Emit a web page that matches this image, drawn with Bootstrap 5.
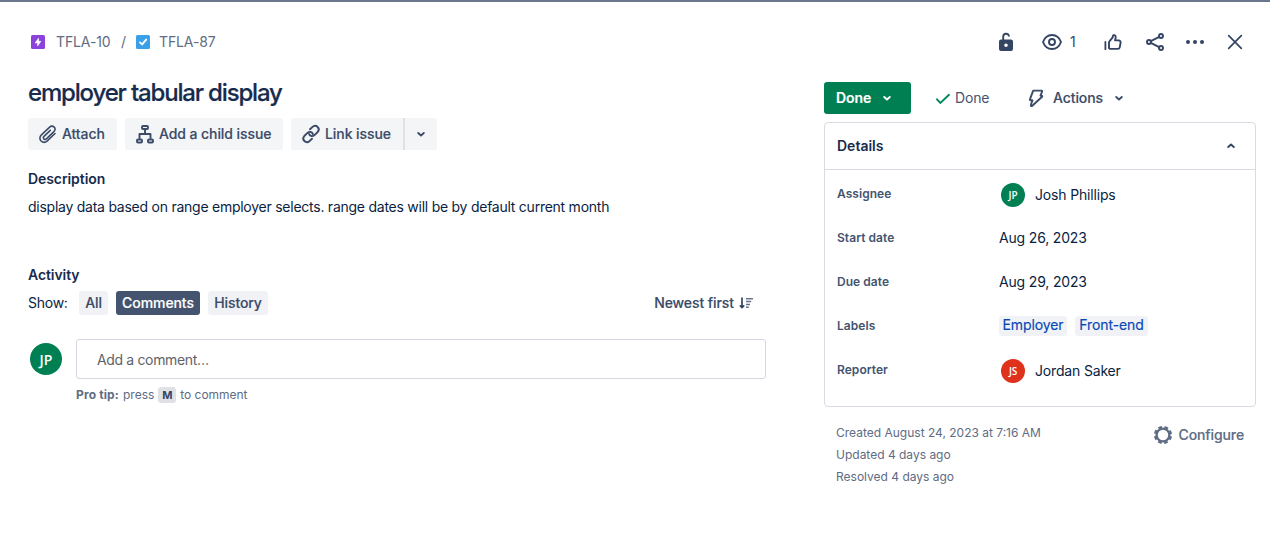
<!DOCTYPE html>
<html lang="en">
<head>
<meta charset="utf-8">
<meta name="viewport" content="width=device-width, initial-scale=1">
<title>TFLA-87 employer tabular display</title>
<link href="https://cdn.jsdelivr.net/npm/bootstrap@5.3.0/dist/css/bootstrap.min.css" rel="stylesheet">
<style>
  body{font-family:Inter,"Liberation Sans",sans-serif;font-size:14px;line-height:20px;color:#172b4d;background:#fff;overflow:hidden}
  svg{display:block;flex:none}
  .ln{fill:none;stroke:currentColor;stroke-width:1.9;stroke-linecap:round;stroke-linejoin:round}
  .issue-view{border-top:2px solid #6b778c;height:538px}
  .crumbs{height:80px;padding:0 23px 0 28px;color:#5e6c84;letter-spacing:-.12px}
  .tools{color:#344563}
  .col-main{width:738px;margin-left:28px}
  .col-side{width:432px;margin-left:58px}
  h1{font-size:24px;line-height:28px;font-weight:500;letter-spacing:-1.17px;margin:-3px 0 11px;color:#172b4d;-webkit-text-stroke:.2px}
  h2{font-size:14px;line-height:20px;font-weight:600;margin:0;letter-spacing:-.08px}
  .btn{--bs-btn-font-size:14px;--bs-btn-line-height:20px;--bs-btn-border-width:0;--bs-btn-border-radius:3px;--bs-btn-color:#3b4b68;height:32px;padding:0;display:flex;align-items:center;font-weight:500;letter-spacing:-.08px;-webkit-text-stroke:.15px}
  .btn-soft{--bs-btn-bg:#f4f5f7}
  .btn-filter{--bs-btn-bg:#f1f2f6;height:24px;justify-content:center}
  .btn-filter.on{background:#44546f;color:#fff}
  .btn-status{background:#007f53;color:#fff;font-weight:600;width:87px}
  .avatar{width:24px;height:24px;font:600 10px "Open Sans",sans-serif;color:#fff;background:#007f53}
  .avatar-lg{width:32px;height:32px;font-size:14px}
  .desc{color:#091e42;letter-spacing:-.25px}
  .comment-box{height:40px;width:690px;border:1px solid #d5d8e0;border-radius:3px;color:#5f6368;padding-left:20px;padding-top:2px;letter-spacing:-.35px}
  .tip{font-size:12px;line-height:16px;color:#5e6c84;margin:8px 0 0 48px}
  kbd{background:#dfe1e6;color:#344563;font:700 11px/16px Inter,sans-serif;padding:0;width:18px;height:16px;text-align:center;border-radius:3px}
  .panel{border:1px solid #d8dbe2;border-radius:4px;height:285px;margin-top:8px}
  .panel-head{height:47px;border-bottom:1px solid #d8dbe2;padding:0 18px 0 12px}
  .field-row{height:44px;padding-left:12px;color:#091e42;letter-spacing:-.17px}
  .field-name{width:162px;font-size:12px;line-height:16px;font-weight:600;color:#44546f;letter-spacing:.05px}
  .tag{background:#f1f2f6;color:#0747b6;border-radius:3px;height:20px;line-height:18px;text-align:center;letter-spacing:-.1px;-webkit-text-stroke:.15px}
  .stamps{font-size:12px;line-height:22px;color:#5e6c84;padding:15px 12px 0}
</style>
</head>
<body>
<main class="issue-view">
  <header class="crumbs d-flex align-items-center justify-content-between">
    <nav class="d-flex align-items-center">
      <svg width="20" height="20" viewBox="0 0 20 20"><rect x="3" y="3" width="14" height="14" rx="1.5" fill="#8c43dc"/><path d="M10.500 6.300v3h2.300L9.700 13.900v-3H7.200z" fill="#fff" stroke="#fff" stroke-width=".7" stroke-linejoin="round"/></svg>
      <span style="margin-left:8px;width:65px">TFLA-10</span><span style="width:12px">/</span>
      <svg width="20" height="20" viewBox="0 0 20 20"><rect x="3" y="3" width="14" height="14" rx="1.5" fill="#3aa1e8"/><path d="M7 10.400l2.100 2L13.200 7.600" fill="none" stroke="#fff" stroke-width="1.900" stroke-linecap="round" stroke-linejoin="round"/></svg>
      <span style="margin-left:6px">TFLA-87</span>
    </nav>
    <div class="tools d-flex align-items-center">
      <svg width="24" height="24" viewBox="0 0 24 24"><path d="M9.200 11V6.300a2.900 2.900 0 0 1 5.700-.4v.6" fill="none" stroke="currentColor" stroke-width="1.900"/><path fill="currentColor" fill-rule="evenodd" d="M7 9.500h10a2 2 0 0 1 2 2v7.500a2 2 0 0 1-2 2H7a2 2 0 0 1-2-2V11.500a2 2 0 0 1 2-2zm5 4a1.800 1.800 0 1 0 0 3.600 1.800 1.800 0 0 0 0-3.600z"/></svg>
      <svg style="margin-left:22px" width="24" height="24" viewBox="0 0 24 24" class="ln"><path d="M3 12c1.500-4 4.800-7 9-7s7.500 3 9 7c-1.500 4-4.800 7-9 7s-7.500-3-9-7z"/><circle cx="12" cy="12" r="3"/></svg>
      <span style="width:15px;margin:0 16px 0 6px">1</span>
      <svg width="24" height="24" viewBox="0 0 24 24" class="ln"><path stroke-width="1.800" d="M4.400 12v7.200"/><path d="M8 17.800V12.600c0-.6.2-1.100.6-1.500l2.900-3.400.5-2c.3-1 2.700-.8 2.700 1.400 0 1.300-.6 2.400-.6 3.300h3.500c1.400 0 2.200.9 2 2.200l-.8 4.500c-.2 1.200-1 1.800-2 1.800H10c-1.200 0-2-.4-2-1.100z"/></svg>
      <svg style="margin-left:18px" width="24" height="24" viewBox="0 0 24 24" class="ln"><circle cx="6" cy="12" r="2"/><circle cx="18" cy="6" r="2"/><circle cx="18" cy="18" r="2"/><path d="M7.800 11.100L16.200 6.900M7.800 12.900l8.400 4.200"/></svg>
      <svg style="margin-left:16px" width="24" height="24" viewBox="0 0 24 24" fill="currentColor"><circle cx="5" cy="12" r="2"/><circle cx="12" cy="12" r="2"/><circle cx="19" cy="12" r="2"/></svg>
      <svg style="margin-left:16px" width="24" height="24" viewBox="0 0 24 24" class="ln"><path stroke-width="1.700" d="M5.700 5.700l12.600 12.600M18.300 5.700L5.700 18.300"/></svg>
    </div>
  </header>

  <div class="d-flex">
    <section class="col-main">
      <h1>employer tabular display</h1>
      <div class="d-flex gap-2">
        <button class="btn btn-soft" style="width:89px;padding-left:8px"><svg width="24" height="24" viewBox="0 0 24 24" class="ln"><path style="stroke-width:1.6" d="M19 11.500l-7.700 7.300c-1.900 1.800-4.500 1.800-6.200.2s-1.600-4.300.3-6.100l8-7.600c1.500-1.400 3.500-1.400 4.800-.2s1.200 3.200-.3 4.600l-7.500 7.100c-.8.800-1.900.8-2.600.1s-.6-1.700.2-2.500l6.300-6"/></svg><span style="margin-left:2px">Attach</span></button>
        <button class="btn btn-soft" style="width:158px;padding-left:8px"><svg width="24" height="24" viewBox="0 0 24 24" class="ln"><rect x="9" y="4" width="6" height="3" rx="1"/><rect x="4" y="17.500" width="5" height="3" rx="1"/><rect x="15" y="17.500" width="5" height="3" rx="1"/><path d="M12 8v4M6.500 16v-4h11v4"/></svg><span style="margin-left:2px">Add a child issue</span></button>
        <div class="d-flex">
          <button class="btn btn-soft rounded-end-0" style="width:112px;padding-left:8px"><svg width="24" height="24" viewBox="0 0 24 24" class="ln"><path d="M11 7.300l2.300-2.200c3.900-3.300 8.500 1.300 5.400 4.900l-3.200 3.100c-2 1.800-4.700 1.100-5.500-1.200"/><path d="M13 16.700l-2.300 2.200c-3.900 3.300-8.500-1.300-5.400-4.900l3.200-3.100c2-1.800 4.700-1.100 5.500 1.200"/></svg><span style="margin-left:2px">Link issue</span></button>
          <button class="btn btn-soft rounded-start-0 justify-content-center" style="width:34px;border-left:2px solid #dfe1e6"><svg width="16" height="16" viewBox="0 0 16 16" class="ln"><path d="M5.200 7L8 9.500 10.800 7"/></svg></button>
        </div>
      </div>
      <h2 style="margin-top:19px">Description</h2>
      <p class="desc mb-0" style="margin-top:8px">display data based on range employer selects. range dates will be by default current month</p>
      <h2 style="margin-top:48px">Activity</h2>
      <div class="d-flex align-items-center" style="margin-top:6px">
        <span class="desc" style="width:51px">Show:</span>
        <button class="btn btn-filter" style="width:29px">All</button>
        <button class="btn btn-filter on" style="width:84px;margin:0 8px">Comments</button>
        <button class="btn btn-filter" style="width:60px">History</button>
        <button class="btn ms-auto" style="height:24px">Newest first</button>
        <svg style="margin:0 12px 0 4px;color:#344563" width="16" height="16" viewBox="0 0 16 16" class="ln"><path stroke-width="1.700" d="M4 3v9.500M2.300 10.900L4 12.600l1.700-1.700"/><path style="stroke-width:1.500" stroke-linecap="butt" opacity=".75" d="M8 3.700h7M8 6.600h5.200M8 9.400h4M8 12.300h2.800"/></svg>
      </div>
      <div class="d-flex align-items-center" style="margin-top:24px">
        <div class="avatar avatar-lg rounded-circle d-flex align-items-center justify-content-center" style="margin:0 14px 0 2px">JP</div>
        <div class="comment-box d-flex align-items-center">Add a comment…</div>
      </div>
      <div class="tip d-flex align-items-center"><b class="fw-bold" style="letter-spacing:.15px">Pro tip:</b><span style="margin:0 4px">press</span><kbd>M</kbd><span style="margin-left:4px;letter-spacing:-.05px">to comment</span></div>
    </section>

    <aside class="col-side">
      <div class="d-flex align-items-center">
        <button class="btn btn-status" style="padding-left:12px">Done<svg style="margin-left:8px" width="16" height="16" viewBox="0 0 16 16" class="ln"><path d="M5.200 7L8 9.500 10.800 7"/></svg></button>
        <div class="d-flex align-items-center" style="margin-left:24px;width:92px;color:#44546f;letter-spacing:-.15px"><svg width="16" height="16" viewBox="0 0 16 16" fill="none" stroke="#00875a" stroke-width="1.900" stroke-linecap="round"><path d="M2 9.300l3.400 3.700L14 4.800"/></svg><span style="margin-left:4px">Done</span></div>
        <button class="btn"><svg style="margin-left:-3px" width="24" height="24" viewBox="0 0 24 24" class="ln"><path d="M9.200 4.600h8.300c.6 0 .8.400.6.900l-1.600 4.200h1c.7 0 1 .6.600 1.100L8.300 19.800c-1 .8-1.800 0-1.400-1l1.600-4.500H6.700c-.7 0-1-.5-.7-1.100z"/></svg><span style="margin-left:5px">Actions</span><svg style="margin-left:8px" width="16" height="16" viewBox="0 0 16 16" class="ln"><path d="M5.200 7L8 9.500 10.800 7"/></svg></button>
      </div>
      <div class="panel">
        <div class="panel-head d-flex align-items-center justify-content-between"><h2 style="letter-spacing:0">Details</h2><svg style="color:#344563" width="12" height="12" viewBox="0 0 12 12" class="ln"><path d="M3.200 7L6 4.500 8.800 7"/></svg></div>
        <div class="field-row d-flex align-items-center" style="padding-top:4px;height:46px"><span class="field-name" style="margin-top:-2px">Assignee</span><span class="avatar rounded-circle d-flex align-items-center justify-content-center" style="margin:0 10px 0 2px">JP</span><span>Josh Phillips</span></div>
        <div class="field-row d-flex align-items-center"><span class="field-name">Start date</span><span>Aug 26, 2023</span></div>
        <div class="field-row d-flex align-items-center"><span class="field-name">Due date</span><span>Aug 29, 2023</span></div>
        <div class="field-row d-flex align-items-center"><span class="field-name">Labels</span><span class="tag" style="width:68px">Employer</span><span class="tag" style="width:73px;margin-left:8px">Front-end</span></div>
        <div class="field-row d-flex align-items-center" style="padding-top:2px"><span class="field-name" style="margin-top:-2px">Reporter</span><span class="avatar rounded-circle d-flex align-items-center justify-content-center" style="margin:0 10px 0 2px;background:#de321c">JS</span><span>Jordan Saker</span></div>
      </div>
      <footer class="stamps d-flex justify-content-between">
        <div>Created August 24, 2023 at 7:16 AM<br>Updated 4 days ago<br>Resolved 4 days ago</div>
        <div class="d-flex align-items-center" style="height:26px;font-size:14px;font-weight:500;letter-spacing:-.12px;-webkit-text-stroke:.15px"><svg style="margin-right:4px" width="24" height="24" viewBox="0 0 24 24"><circle cx="12" cy="12" r="6.400" fill="none" stroke="currentColor" stroke-width="2.400"/><circle cx="12" cy="12" r="8" fill="none" stroke="currentColor" stroke-width="2.200" stroke-dasharray="3.700 2.583" stroke-dashoffset="-1.300"/></svg>Configure</div>
      </footer>
    </aside>
  </div>
</main>
<script src="https://cdn.jsdelivr.net/npm/bootstrap@5.3.0/dist/js/bootstrap.bundle.min.js"></script>
</body>
</html>
